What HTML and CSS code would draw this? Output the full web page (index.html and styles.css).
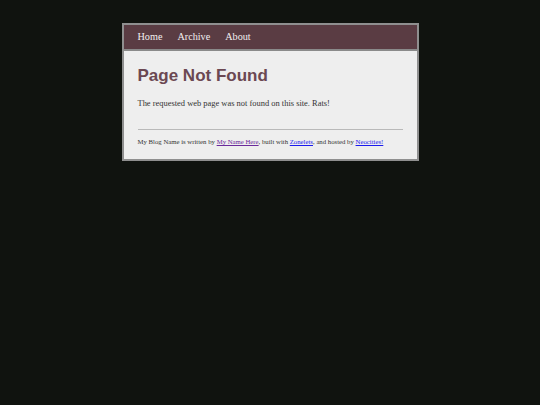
FILE: index.html
```html
<!DOCTYPE html>
<html>
<head>
<meta charset="utf-8">
<title>Page Not Found</title>
<link rel="stylesheet" href="styles.css">
</head>
<body>
<div class="box">
  <header class="header">
    <nav class="nav">
      <a href="#">Home</a>
      <a href="#">Archive</a>
      <a href="#">About</a>
    </nav>
  </header>
  <main class="content">
    <h1 class="title">Page Not Found</h1>
    <p class="text">The requested web page was not found on this site. Rats!</p>
    <hr class="rule">
    <footer class="footer">My Blog Name is written by <a class="visited" href="#">My Name Here</a>, built with <a class="link" href="#">Zonelets</a>, and hosted by <a class="link" href="#">Neocities!</a></footer>
  </main>
</div>
</body>
</html>
```
FILE: styles.css
```css
html, body {
  margin: 0;
  padding: 0;
  background: #10130f;
}
body {
  font-family: "Liberation Serif", "Times New Roman", serif;
  color: #333;
}
.box {
  width: 293px;
  margin: 23px auto 0;
  border: 2px solid #8f8f8f;
  background: #eeeeee;
}
.header {
  height: 24px;
  background: #5a3c43;
  border-bottom: 2px solid #8a8a8a;
}
.nav {
  display: flex;
  gap: 15px;
  padding-left: 14px;
  line-height: 24px;
  font-size: 10.2px;
}
.nav a {
  color: #f2eef0;
  text-decoration: none;
}
.content {
  padding: 15px 14px 12px;
}
.title {
  margin: 0;
  font-family: "Liberation Sans", Arial, sans-serif;
  font-weight: bold;
  font-size: 17px;
  line-height: 20px;
  color: #6b4852;
}
.text {
  margin: 11px 0 0;
  font-size: 8.45px;
  line-height: 12px;
  color: #333;
}
.rule {
  margin: 20px 0 0;
  border: 0;
  height: 1px;
  background: #b9b9b9;
}
.footer {
  margin-top: 7px;
  font-size: 6.75px;
  line-height: 10px;
  color: #333;
}
.footer a {
  text-decoration: underline;
}
.link {
  color: #1a1aee;
}
.visited {
  color: #6a2a9b;
}
```
